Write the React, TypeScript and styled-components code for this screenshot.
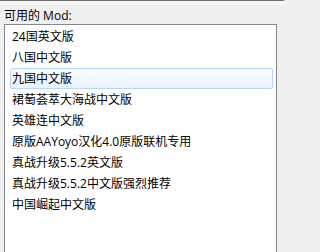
import React, { useState } from 'react';
import styled, { createGlobalStyle } from 'styled-components';

const mods = [
  '24国英文版',
  '八国中文版',
  '九国中文版',
  '裙萄荟萃大海战中文版',
  '英雄连中文版',
  '原版AAYoyo汉化4.0原版联机专用',
  '真战升级5.5.2英文版',
  '真战升级5.5.2中文版强烈推荐',
  '中国崛起中文版',
];

const App: React.FC = () => {
  const [hovered, setHovered] = useState(2);

  return (
    <>
      <GlobalStyle />
      <Panel>
        <Label>可用的 Mod:</Label>
        <ListBox>
          {mods.map((name, i) => (
            <Item key={name} active={i === hovered} onMouseEnter={() => setHovered(i)}>
              {name}
            </Item>
          ))}
        </ListBox>
      </Panel>
    </>
  );
};

export default App;

const GlobalStyle = createGlobalStyle`
  html, body {
    margin: 0;
    padding: 0;
    background: #f0f0f0;
  }
  body {
    font-family: "Open Sans", "Noto Sans CJK SC", sans-serif;
    font-size: 12px;
    color: #000;
  }
`;

const Panel = styled.div`
  width: 284px;
  height: 252px;
  box-sizing: border-box;
  display: flex;
  flex-direction: column;
  border-top: 1px solid #6e6e6e;
  background: linear-gradient(#f6f6f6 0, #f6f6f6 4px, #f0f0f0 4px);
  padding: 0 7px 0 4px;
  overflow: hidden;
`;

const Label = styled.div`
  height: 23px;
  box-sizing: border-box;
  padding-top: 7px;
  line-height: 16px;
  white-space: nowrap;
`;

const ListBox = styled.div`
  flex: 1;
  background: #fff;
  border: 1px solid #828790;
  border-bottom: none;
  padding: 1px 3px 0 5px;
`;

const Item = styled.div<{ active: boolean }>`
  height: 21px;
  box-sizing: border-box;
  line-height: ${({ active }) => (active ? '19px' : '21px')};
  padding-left: ${({ active }) => (active ? '1px' : '2px')};
  white-space: nowrap;
  border: ${({ active }) => (active ? '1px solid #b8d6fb' : 'none')};
  border-radius: 2px;
  background: ${({ active }) => (active ? 'linear-gradient(#fafbfd, #ebf3fd)' : 'transparent')};
`;
